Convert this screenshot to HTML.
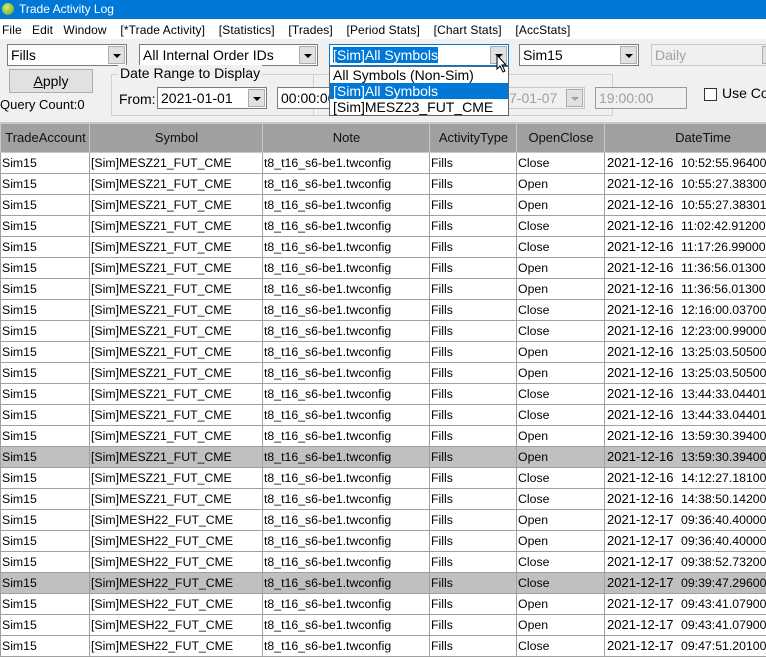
<!DOCTYPE html>
<html><head><style>
*{margin:0;padding:0;box-sizing:border-box}
body{width:766px;height:657px;overflow:hidden;background:#f0f0f0;font-family:"Liberation Sans",sans-serif;font-size:13px;color:#000;position:relative}
.a{position:absolute;white-space:nowrap}
.combo{position:absolute;height:22px;background:#fff;border:1px solid #7a7a7a;font-size:14px;line-height:20px;padding-left:3px}
.combo .btn{position:absolute;right:1px;top:1px;width:17px;height:18px;background:#e1e1e1;border:1px solid #adadad}
.combo .btn:after{content:"";position:absolute;left:4px;top:7px;border-left:4px solid transparent;border-right:4px solid transparent;border-top:4px solid #000}
.dis{background:#f0f0f0;color:#a0a0a0;border-color:#c8c8c8}
.dis .btn:after{border-top-color:#a0a0a0}
table{position:absolute;left:0;top:122px;border-collapse:collapse;table-layout:fixed;width:800px;font-size:12.3px}
td,th{border:1px solid #a0a0a0;height:21px;padding:0 0 0 1px;overflow:hidden;white-space:nowrap;font-weight:normal;text-align:left}
th{background:#a0a0a0;height:29px;text-align:center;border-top:2px solid #e0e0e0;border-color:#c8c8c8;color:#111;font-size:13px}
tr.s td{background:#c0c0c0}
td{background:#fff}
td:last-child{padding-left:2px}
td i{font-style:normal;display:inline-block;width:74px;font-size:13px}
</style></head><body>
<div class="a" style="left:0;top:0;width:766px;height:19px;background:#0078d7;color:#fff;font-size:12px;line-height:19px;padding-left:19px">Trade Activity Log</div>
<div class="a" style="left:2px;top:3px;width:12px;height:12px;border-radius:50%;background:radial-gradient(circle at 40% 35%,#d8f070,#5a9a20)"></div>
<div class="a" style="left:0;top:19px;width:766px;height:20px;background:#fff;font-size:12px;line-height:22px;padding-left:2px;letter-spacing:0.1px">File&nbsp;&nbsp;&nbsp;Edit&nbsp;&nbsp;&nbsp;Window&nbsp;&nbsp;&nbsp;&nbsp;[*Trade Activity]&nbsp;&nbsp;&nbsp;&nbsp;[Statistics]&nbsp;&nbsp;&nbsp;&nbsp;[Trades]&nbsp;&nbsp;&nbsp;&nbsp;[Period Stats]&nbsp;&nbsp;&nbsp;&nbsp;[Chart Stats]&nbsp;&nbsp;&nbsp;&nbsp;[AccStats]</div>
<div class="combo" style="left:7px;top:44px;width:120px">Fills<div class="btn"></div></div>
<div class="combo" style="left:139px;top:44px;width:179px">All Internal Order IDs<div class="btn"></div></div>
<div class="combo" style="left:329px;top:44px;width:180px;border-color:#0078d7"><span style="background:#0078d7;color:#fff">[Sim]All Symbols</span><div class="btn"></div></div>
<div class="combo" style="left:519px;top:44px;width:120px">Sim15<div class="btn"></div></div>
<div class="combo dis" style="left:651px;top:44px;width:130px">Daily<div class="btn"></div></div>
<div class="a" style="left:9px;top:69px;width:84px;height:24px;background:#e1e1e1;border:1px solid #adadad;text-align:center;font-size:14px;line-height:22px"><u>A</u>pply</div>
<div class="a" style="left:0;top:97px;font-size:13px">Query Count:0</div>
<div class="a" style="left:111px;top:74px;width:203px;height:42px;border:1px solid #d0d0d0"></div>
<div class="a" style="left:313px;top:74px;width:300px;height:42px;border:1px solid #d0d0d0;border-left:none"></div>
<div class="a" style="left:118px;top:65px;background:#f0f0f0;padding:0 2px;font-size:14px">Date Range to Display</div>
<div class="a" style="left:119px;top:91px;font-size:14px">From:</div>
<div class="combo" style="left:157px;top:87px;width:110px">2021-01-01<div class="btn"></div></div>
<div class="combo" style="left:277px;top:87px;width:60px;overflow:hidden">00:00:00</div>
<div class="combo dis" style="left:500px;top:87px;width:85px;padding-left:8px">7-01-07<div class="btn"></div></div>
<div class="combo dis" style="left:595px;top:87px;width:92px;border-color:#999">19:00:00</div>
<div class="a" style="left:704px;top:88px;width:13px;height:13px;border:1px solid #333;background:#fff"></div>
<div class="a" style="left:722px;top:85px;font-size:14px">Use Co</div>
<div class="a" style="left:329px;top:66px;width:180px;height:50px;background:#fff;border:1px solid #646464;font-size:14px;line-height:16px;z-index:5">
<div style="padding-left:3px">All Symbols (Non-Sim)</div>
<div style="padding-left:3px;background:#0078d7;color:#fff">[Sim]All Symbols</div>
<div style="padding-left:3px">[Sim]MESZ23_FUT_CME</div></div>
<svg class="a" style="left:496px;top:54px;z-index:6" width="14" height="20" viewBox="0 0 14 20"><path d="M1 1 L1 15 L4 12 L7 18 L9 17 L6 11 L10 11 Z" fill="#fff" stroke="#000"/></svg>
<table>
<colgroup><col style="width:89px"><col style="width:173px"><col style="width:167px"><col style="width:87px"><col style="width:88px"><col style="width:196px"></colgroup>
<tr><th>TradeAccount</th><th>Symbol</th><th>Note</th><th>ActivityType</th><th>OpenClose</th><th>DateTime</th></tr>
<tr><td>Sim15</td><td>[Sim]MESZ21_FUT_CME</td><td>t8_t16_s6-be1.twconfig</td><td>Fills</td><td>Close</td><td><i>2021-12-16</i>10:52:55.964000</td></tr>
<tr><td>Sim15</td><td>[Sim]MESZ21_FUT_CME</td><td>t8_t16_s6-be1.twconfig</td><td>Fills</td><td>Open</td><td><i>2021-12-16</i>10:55:27.383000</td></tr>
<tr><td>Sim15</td><td>[Sim]MESZ21_FUT_CME</td><td>t8_t16_s6-be1.twconfig</td><td>Fills</td><td>Open</td><td><i>2021-12-16</i>10:55:27.383010</td></tr>
<tr><td>Sim15</td><td>[Sim]MESZ21_FUT_CME</td><td>t8_t16_s6-be1.twconfig</td><td>Fills</td><td>Close</td><td><i>2021-12-16</i>11:02:42.912000</td></tr>
<tr><td>Sim15</td><td>[Sim]MESZ21_FUT_CME</td><td>t8_t16_s6-be1.twconfig</td><td>Fills</td><td>Close</td><td><i>2021-12-16</i>11:17:26.990000</td></tr>
<tr><td>Sim15</td><td>[Sim]MESZ21_FUT_CME</td><td>t8_t16_s6-be1.twconfig</td><td>Fills</td><td>Open</td><td><i>2021-12-16</i>11:36:56.013000</td></tr>
<tr><td>Sim15</td><td>[Sim]MESZ21_FUT_CME</td><td>t8_t16_s6-be1.twconfig</td><td>Fills</td><td>Open</td><td><i>2021-12-16</i>11:36:56.013000</td></tr>
<tr><td>Sim15</td><td>[Sim]MESZ21_FUT_CME</td><td>t8_t16_s6-be1.twconfig</td><td>Fills</td><td>Close</td><td><i>2021-12-16</i>12:16:00.037000</td></tr>
<tr><td>Sim15</td><td>[Sim]MESZ21_FUT_CME</td><td>t8_t16_s6-be1.twconfig</td><td>Fills</td><td>Close</td><td><i>2021-12-16</i>12:23:00.990000</td></tr>
<tr><td>Sim15</td><td>[Sim]MESZ21_FUT_CME</td><td>t8_t16_s6-be1.twconfig</td><td>Fills</td><td>Open</td><td><i>2021-12-16</i>13:25:03.505000</td></tr>
<tr><td>Sim15</td><td>[Sim]MESZ21_FUT_CME</td><td>t8_t16_s6-be1.twconfig</td><td>Fills</td><td>Open</td><td><i>2021-12-16</i>13:25:03.505000</td></tr>
<tr><td>Sim15</td><td>[Sim]MESZ21_FUT_CME</td><td>t8_t16_s6-be1.twconfig</td><td>Fills</td><td>Close</td><td><i>2021-12-16</i>13:44:33.044010</td></tr>
<tr><td>Sim15</td><td>[Sim]MESZ21_FUT_CME</td><td>t8_t16_s6-be1.twconfig</td><td>Fills</td><td>Close</td><td><i>2021-12-16</i>13:44:33.044010</td></tr>
<tr><td>Sim15</td><td>[Sim]MESZ21_FUT_CME</td><td>t8_t16_s6-be1.twconfig</td><td>Fills</td><td>Open</td><td><i>2021-12-16</i>13:59:30.394000</td></tr>
<tr class="s"><td>Sim15</td><td>[Sim]MESZ21_FUT_CME</td><td>t8_t16_s6-be1.twconfig</td><td>Fills</td><td>Open</td><td><i>2021-12-16</i>13:59:30.394000</td></tr>
<tr><td>Sim15</td><td>[Sim]MESZ21_FUT_CME</td><td>t8_t16_s6-be1.twconfig</td><td>Fills</td><td>Close</td><td><i>2021-12-16</i>14:12:27.181000</td></tr>
<tr><td>Sim15</td><td>[Sim]MESZ21_FUT_CME</td><td>t8_t16_s6-be1.twconfig</td><td>Fills</td><td>Close</td><td><i>2021-12-16</i>14:38:50.142000</td></tr>
<tr><td>Sim15</td><td>[Sim]MESH22_FUT_CME</td><td>t8_t16_s6-be1.twconfig</td><td>Fills</td><td>Open</td><td><i>2021-12-17</i>09:36:40.400000</td></tr>
<tr><td>Sim15</td><td>[Sim]MESH22_FUT_CME</td><td>t8_t16_s6-be1.twconfig</td><td>Fills</td><td>Open</td><td><i>2021-12-17</i>09:36:40.400000</td></tr>
<tr><td>Sim15</td><td>[Sim]MESH22_FUT_CME</td><td>t8_t16_s6-be1.twconfig</td><td>Fills</td><td>Close</td><td><i>2021-12-17</i>09:38:52.732000</td></tr>
<tr class="s"><td>Sim15</td><td>[Sim]MESH22_FUT_CME</td><td>t8_t16_s6-be1.twconfig</td><td>Fills</td><td>Close</td><td><i>2021-12-17</i>09:39:47.296000</td></tr>
<tr><td>Sim15</td><td>[Sim]MESH22_FUT_CME</td><td>t8_t16_s6-be1.twconfig</td><td>Fills</td><td>Open</td><td><i>2021-12-17</i>09:43:41.079000</td></tr>
<tr><td>Sim15</td><td>[Sim]MESH22_FUT_CME</td><td>t8_t16_s6-be1.twconfig</td><td>Fills</td><td>Open</td><td><i>2021-12-17</i>09:43:41.079000</td></tr>
<tr><td>Sim15</td><td>[Sim]MESH22_FUT_CME</td><td>t8_t16_s6-be1.twconfig</td><td>Fills</td><td>Close</td><td><i>2021-12-17</i>09:47:51.201000</td></tr>
</table>
</body></html>
